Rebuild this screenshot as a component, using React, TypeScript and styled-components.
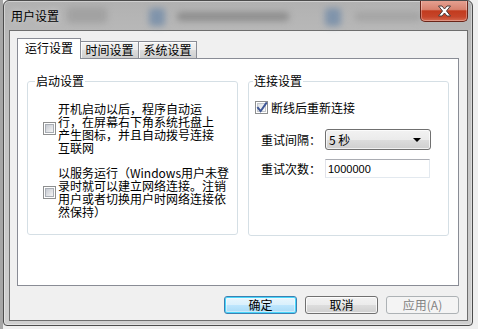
import React from "react";
import styled, { createGlobalStyle, css } from "styled-components";

const GlobalStyle = createGlobalStyle`
  html, body {
    margin: 0;
    padding: 0;
  }
  body {
    width: 478px;
    height: 329px;
    overflow: hidden;
    background: linear-gradient(to right, #a6a6a6 0, #a6a6a6 3px, #efefef 3px);
    font-family: "Noto Sans CJK SC", "Noto Sans", sans-serif;
    font-size: 12px;
    color: #000;
  }
`;

const Window = styled.div`
  position: relative;
  box-sizing: border-box;
  width: 470px;
  height: 326px;
  margin-left: 3px;
  padding: 0 4px 4px 5px;
  display: flex;
  flex-direction: column;
  border: 1px solid #4c4c4c;
  border-radius: 6px 6px 4px 4px;
  background: linear-gradient(to bottom, #b1b1b1 0, #b8b8b8 30px, #c4c4c4 130px, #cfcfcf 100%);
  box-shadow: inset 0 0 0 1px rgba(255, 255, 255, 0.4);
  overflow: hidden;
`;

const TitleBar = styled.div`
  position: relative;
  height: 29px;
  flex: none;
  display: flex;
  align-items: flex-start;
`;

const Blur = styled.span`
  position: absolute;
  filter: blur(3px);
  border-radius: 4px;
`;

const Title = styled.div`
  position: relative;
  margin-top: 8px;
  padding-left: 2px;
  line-height: 14px;
  color: #000;
  text-shadow: 0 0 6px rgba(255, 255, 255, 0.5);
`;

const CloseButton = styled.div`
  position: relative;
  box-sizing: border-box;
  margin-left: auto;
  margin-top: -1px;
  width: 48px;
  height: 22px;
  display: flex;
  align-items: center;
  justify-content: center;
  border: 1px solid #6a2519;
  border-top: none;
  border-radius: 0 0 5px 5px;
  background: linear-gradient(
    to bottom,
    #e6a394 0%,
    #d8826f 45%,
    #c23b1e 52%,
    #c6452a 80%,
    #d56a50 100%
  );
  box-shadow: inset 0 0 0 1px rgba(255, 255, 255, 0.3);
`;

const Client = styled.div`
  flex: 1;
  display: flex;
  flex-direction: column;
  border: 1px solid #6e6e6e;
  background: #f0f0f0;
  padding: 7px 8px 0 7px;
`;

const TabStrip = styled.div`
  height: 20px;
  display: flex;
  align-items: flex-end;
  flex: none;
`;

const Tab = styled.div<{ $active?: boolean; $w: number }>`
  box-sizing: border-box;
  width: ${(p) => p.$w}px;
  display: flex;
  align-items: center;
  justify-content: center;
  border: 1px solid #898c95;
  border-bottom: none;
  line-height: 14px;
  & + & {
    margin-left: -1px;
  }
  ${(p) =>
    p.$active
      ? css`
          position: relative;
          z-index: 1;
          height: 21px;
          margin-bottom: -1px;
          padding-bottom: 2px;
          background: #fff;
        `
      : css`
          height: 17px;
          background: linear-gradient(to bottom, #f3f3f3 0%, #ebebeb 50%, #dddddd 51%, #cfcfcf 100%);
          box-shadow: inset 1px 1px 0 rgba(255, 255, 255, 0.8);
        `}
`;

const Panel = styled.div`
  box-sizing: border-box;
  height: 228px;
  flex: none;
  border: 1px solid #898c95;
  background: #fff;
  padding: 15px 9px 0 9px;
  display: grid;
  grid-template-columns: 211px 201px;
  column-gap: 10px;
  align-items: start;
`;

const Group = styled.fieldset<{ $pad: number; $h: number }>`
  box-sizing: border-box;
  margin: 0;
  min-width: 0;
  height: ${(p) => p.$h}px;
  padding: 0 0 0 ${(p) => p.$pad}px;
  border: 1px solid #d5dfe5;
  border-radius: 3px;
`;

const Legend = styled.legend`
  padding: 0 1px;
  line-height: 14px;
  font-size: 12px;
`;

const CheckRow = styled.div<{ $top: number; $left: number; $gap: number }>`
  display: flex;
  align-items: center;
  gap: ${(p) => p.$gap}px;
  margin: ${(p) => p.$top}px 0 0 ${(p) => p.$left}px;
`;

const CheckText = styled.div`
  line-height: 13px;
  white-space: nowrap;
`;

const Box = styled.span<{ $checked?: boolean }>`
  position: relative;
  box-sizing: border-box;
  flex: none;
  width: 13px;
  height: 13px;
  border: 1px solid #8e8f8f;
  background: #fff;
  &::before {
    content: "";
    position: absolute;
    left: 1px;
    top: 1px;
    right: 1px;
    bottom: 1px;
    border: 1px solid ${(p) => (p.$checked ? "#c3c7cc" : "#a9aeb5")};
    background: ${(p) =>
      p.$checked
        ? "linear-gradient(135deg, #dfe2e6, #fbfbfb)"
        : "linear-gradient(135deg, #c6cad1, #f4f4f4)"};
  }
  svg {
    position: absolute;
    left: -1px;
    top: -2px;
  }
`;

const FieldRow = styled.div<{ $top: number }>`
  display: flex;
  align-items: center;
  margin: ${(p) => p.$top}px 0 0 8px;
`;

const FieldLabel = styled.span`
  width: 64px;
  line-height: 14px;
  flex: none;
`;

const Combo = styled.div`
  box-sizing: border-box;
  width: 106px;
  height: 21px;
  display: flex;
  align-items: center;
  justify-content: space-between;
  padding: 0 9px 0 3px;
  border: 1px solid #707070;
  border-radius: 3px;
  background: linear-gradient(to bottom, #f2f2f2 0%, #ebebeb 50%, #dddddd 51%, #cfcfcf 100%);
  box-shadow: inset 0 0 0 1px rgba(255, 255, 255, 0.7);
  line-height: 14px;
`;

const Arrow = styled.span`
  width: 0;
  height: 0;
  border-left: 4px solid transparent;
  border-right: 4px solid transparent;
  border-top: 4px solid #000;
  margin-top: 1px;
`;

const Input = styled.div`
  box-sizing: border-box;
  width: 105px;
  height: 19px;
  display: flex;
  align-items: center;
  padding-left: 2px;
  background: #fff;
  border: 1px solid #e3e9ef;
  border-top-color: #abadb3;
  border-left-color: #e2e3ea;
  font-family: "Liberation Sans", Arial, sans-serif;
  font-size: 11px;
`;

const ButtonRow = styled.div`
  display: flex;
  justify-content: flex-end;
  gap: 8px;
  margin-top: 10px;
`;

const Button = styled.div<{ $variant?: "default" | "disabled" }>`
  box-sizing: border-box;
  width: 73px;
  height: 18px;
  display: flex;
  align-items: center;
  justify-content: center;
  border-radius: 3px;
  line-height: 14px;
  border: 1px solid #707070;
  background: linear-gradient(to bottom, #f2f2f2 0%, #ebebeb 50%, #dddddd 51%, #cfcfcf 100%);
  box-shadow: inset 0 0 0 1px rgba(255, 255, 255, 0.75);
  ${(p) =>
    p.$variant === "default" &&
    css`
      border-color: #3c7fb1;
      background: linear-gradient(to bottom, #eaf6fd 0%, #d9f0fc 50%, #bee6fd 51%, #a7d9f5 100%);
      box-shadow: inset 0 0 0 1px #48d6fb, inset 0 0 0 2px rgba(255, 255, 255, 0.4);
    `}
  ${(p) =>
    p.$variant === "disabled" &&
    css`
      border-color: #adb2b5;
      background: #f4f4f4;
      box-shadow: none;
      color: #838383;
    `}
`;

const CheckBox = ({ checked }: { checked?: boolean }) => (
  <Box $checked={checked}>
    {checked && (
      <svg width="14" height="15" viewBox="0 0 14 15">
        <path
          d="M3 8 L5.6 11.2 L11.2 3.2"
          fill="none"
          stroke="#3e5696"
          strokeWidth="2"
          strokeLinecap="square"
        />
      </svg>
    )}
  </Box>
);

const App: React.FC = () => {
  return (
    <>
      <GlobalStyle />
      <Window>
        <TitleBar>
          <Blur style={{ left: 58, top: 6, width: 40, height: 16, background: "#a2a2a2" }} />
          <Blur style={{ left: 140, top: 7, width: 16, height: 18, background: "#8094ab" }} />
          <Blur style={{ left: 168, top: 11, width: 112, height: 9, background: "#8e8e8e" }} />
          <Blur style={{ left: 316, top: 7, width: 16, height: 18, background: "#8094ab" }} />
          <Blur style={{ left: 346, top: 11, width: 66, height: 9, background: "#a4a4a4" }} />
          <Title>用户设置</Title>
          <CloseButton>
            <svg width="15" height="12" viewBox="0 0 15 12">
              <path
                d="M1.5 1 L5 1 L7.5 4 L10 1 L13.5 1 L9.5 6 L13.5 11 L10 11 L7.5 8 L5 11 L1.5 11 L5.5 6 Z"
                fill="#ffffff"
                stroke="#4a3a38"
                strokeWidth="1"
                strokeLinejoin="round"
              />
            </svg>
          </CloseButton>
        </TitleBar>

        <Client>
          <TabStrip>
            <Tab $active $w={64}>运行设置</Tab>
            <Tab $w={59}>时间设置</Tab>
            <Tab $w={59}>系统设置</Tab>
          </TabStrip>

          <Panel>
            <Group $pad={7} $h={161}>
              <Legend>启动设置</Legend>
              <CheckRow $top={14} $left={8} $gap={2}>
                <CheckBox />
                <CheckText>
                  开机启动以后，程序自动运
                  <br />
                  行，在屏幕右下角系统托盘上
                  <br />
                  产生图标，并且自动拨号连接
                  <br />
                  互联网
                </CheckText>
              </CheckRow>
              <CheckRow $top={12} $left={8} $gap={2}>
                <CheckBox />
                <CheckText>
                  以服务运行（Windows用户未登
                  <br />
                  录时就可以建立网络连接。注销
                  <br />
                  用户或者切换用户时网络连接依
                  <br />
                  然保持）
                </CheckText>
              </CheckRow>
            </Group>

            <Group $pad={4} $h={162}>
              <Legend>连接设置</Legend>
              <CheckRow $top={13} $left={2} $gap={3}>
                <CheckBox checked />
                <CheckText>断线后重新连接</CheckText>
              </CheckRow>
              <FieldRow $top={15}>
                <FieldLabel>重试间隔：</FieldLabel>
                <Combo>
                  <span>5 秒</span>
                  <Arrow />
                </Combo>
              </FieldRow>
              <FieldRow $top={9}>
                <FieldLabel>重试次数：</FieldLabel>
                <Input>1000000</Input>
              </FieldRow>
            </Group>
          </Panel>

          <ButtonRow>
            <Button $variant="default">确定</Button>
            <Button>取消</Button>
            <Button $variant="disabled">应用(A)</Button>
          </ButtonRow>
        </Client>
      </Window>
    </>
  );
};

export default App;
